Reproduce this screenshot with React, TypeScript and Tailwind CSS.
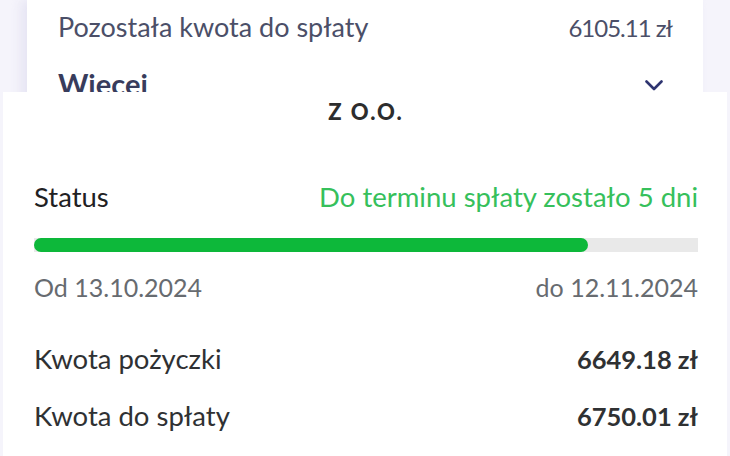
const font = { fontFamily: "Lato, 'Noto Sans', sans-serif" };

function Row({ label, value }: { label: string; value: string }) {
  return (
    <div className="flex items-baseline justify-between leading-none text-[#2f3133]">
      <span className="text-[27.5px]">{label}</span>
      <span className="text-[25.5px] font-bold">{value}</span>
    </div>
  );
}

export default function App() {
  const progress = 83.4;
  return (
    <div className="h-[456px] w-[730px] overflow-hidden bg-[#f5f4fb]" style={font}>
      {/* Card behind */}
      <div className="h-[92px] overflow-hidden px-[27px]">
        <div className="h-[140px] bg-white px-[31px] pt-[13px] shadow-[-6px_0_10px_rgba(220,218,238,0.6)]">
          <div className="flex items-baseline justify-between leading-none text-[#4b4f68]">
            <span className="text-[27px]">Pozostała kwota do spłaty</span>
            <span className="text-[24px] tracking-[-1px]">6105.11 zł</span>
          </div>
          <div className="mt-[29px] flex items-start justify-between text-[#383c5c]">
            <span className="text-[29px] font-bold leading-none">Wiecej</span>
            <svg className="mr-[9px] mt-[11px]" width="18" height="11" viewBox="0 0 18 11" fill="none">
              <polyline
                points="1.5,1.5 9,9 16.5,1.5"
                stroke="#2e3470"
                strokeWidth="2.6"
                strokeLinecap="round"
                strokeLinejoin="round"
              />
            </svg>
          </div>
        </div>
      </div>

      {/* Details panel */}
      <div className="mx-[3px] h-[364px] bg-white pl-[31px] pr-[29px]">
        <h2 className="pt-[9px] text-center text-[22px] font-black leading-none tracking-[2px] text-[#2d2d2d]">
          Z O.O.
        </h2>
        <div className="mt-[60px] flex items-center justify-between text-[27.5px] leading-none">
          <span className="text-[#1f2123]">Status</span>
          <span className="text-[#36c05b]">Do terminu spłaty zostało 5 dni</span>
        </div>
        <div className="mt-[27px] h-[14px] w-full bg-[#e9e9e9]">
          <div className="h-full rounded-full bg-[#0db83a]" style={{ width: `${progress}%` }} />
        </div>
        <div className="mt-[23px] flex items-center justify-between text-[25px] leading-none text-[#676b70]">
          <span>Od 13.10.2024</span>
          <span>do 12.11.2024</span>
        </div>
        <div className="mt-[45px] flex flex-col gap-[30px]">
          <Row label="Kwota pożyczki" value="6649.18 zł" />
          <Row label="Kwota do spłaty" value="6750.01 zł" />
        </div>
      </div>
    </div>
  );
}
